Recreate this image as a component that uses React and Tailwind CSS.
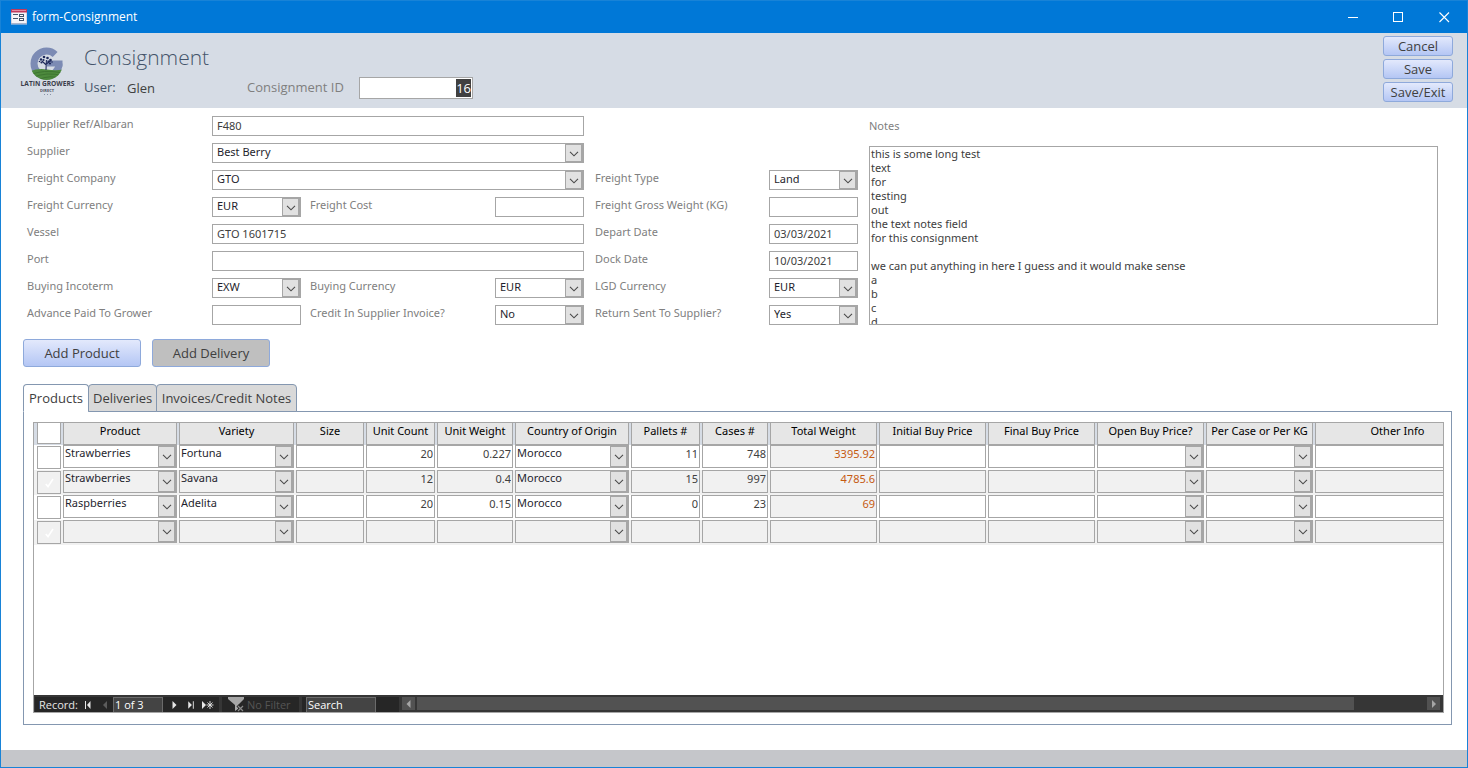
import { useEffect, useRef } from 'react';

const cn = (...parts) => parts.filter(Boolean).join(' ');

const smallText = "font-['Noto_Sans','Open_Sans',sans-serif] text-[11px]";

function Chevron() {
  return (
    <span
      aria-hidden="true"
      className="pointer-events-none absolute inset-y-0 right-0 flex w-[18px] items-center justify-center border border-r-2 border-[#a6a6a6] bg-[#e1e1e1]"
    >
      <svg width="10" height="6" viewBox="0 0 10 6" fill="none" stroke="#4a4a4a" strokeWidth="1.1" className="mt-px">
        <path d="M1 .8 5 4.8 9 .8" />
      </svg>
    </span>
  );
}

function Label({ id, children, className }) {
  return (
    <label htmlFor={id} className={cn(smallText, 'whitespace-nowrap leading-4 text-[#808080]', className)}>
      {children}
    </label>
  );
}

function TextField({ id, value = '', className }) {
  return (
    <input
      id={id}
      type="text"
      defaultValue={value}
      className={cn(smallText, 'h-5 w-full min-w-0 border border-[#a6a6a6] bg-white px-1 pb-0.5 leading-4 text-[#404040] outline-none', className)}
    />
  );
}

function SelectField({ id, value, className }) {
  return (
    <div className={cn('relative h-5 border border-[#a6a6a6] bg-white', className)}>
      <select
        id={id}
        defaultValue={value}
        className={cn(smallText, 'block h-[18px] w-full appearance-none bg-transparent pr-5 pb-0.5 pl-1 leading-4 text-[#1f1f2e] outline-none')}
      >
        <option>{value}</option>
      </select>
      <Chevron />
    </div>
  );
}

const actionButton =
  'flex items-center justify-center rounded-[3px] border border-[#8ea9db] bg-linear-to-b from-[#e3e9fc] to-[#b4c6f4] pb-px text-[13px] leading-4 text-[#404040]';

function FormIcon() {
  return (
    <svg width="16" height="16" viewBox="0 0 16 16" aria-hidden="true">
      <rect x=".5" y=".5" width="15" height="14.5" fill="#f4f4f8" stroke="#d7d3e0" />
      <rect width="16" height="3.5" fill="#c0395c" />
      <rect x="1" y="1" width="14" height="1" fill="#e08aa0" />
      <path d="M2 5.500h5M2 9.500h5" stroke="#44546a" />
      <rect x="8.5" y="5.500" width="4" height="2" fill="#fff" stroke="#44546a" />
      <rect x="8.5" y="9.500" width="4" height="2" fill="#fff" stroke="#44546a" />
      <path d="M0 14.500h16" stroke="#a9b4cc" />
    </svg>
  );
}

function Logo() {
  return (
    <svg width="56" height="52" viewBox="0 0 56 52" role="img" aria-label="Latin Growers Direct" className="shrink-0">
      <defs>
        <clipPath id="disc">
          <circle cx="26.5" cy="18.500" r="16.5" />
        </clipPath>
      </defs>
      <circle cx="26.5" cy="18.500" r="12.5" fill="none" stroke="#7c8bb4" strokeWidth="7" strokeDasharray="68 10.540" />
      <rect x="27" y="15.500" width="15.500" height="6" fill="#7c8bb4" />
      <g clipPath="url(#disc)">
        <path d="M8 27 Q17 23 27 24.5 T46 24 V36 H8 Z" fill="#4d8a3d" />
        <path d="M10 30 Q22 24 44 28 M12 33 Q26 26 44 31 M18 35 Q30 29 42 34" stroke="#3a702f" fill="none" strokeWidth=".8" />
      </g>
      <path d="M26 25 26.4 15M26.2 20 22 16M26.3 19 31 15.5" stroke="#1f2a5c" strokeWidth="1.1" fill="none" />
      <g fill="#1f2a5c">
        <circle cx="21" cy="14.5" r="1.2" />
        <circle cx="24" cy="12" r="1.3" />
        <circle cx="23.500" cy="15" r="1.100" />
        <circle cx="27.5" cy="13" r="1.3" />
        <circle cx="30.5" cy="15" r="1.3" />
        <circle cx="28.500" cy="16.500" r="1" />
        <circle cx="21.5" cy="17.500" r="1.1" />
        <circle cx="30" cy="18.5" r="1.1" />
        <circle cx="32" cy="17" r=".8" />
        <circle cx="19.5" cy="16.5" r=".8" />
      </g>
      <text x="27.5" y="41" textAnchor="middle" fontFamily="Open Sans, sans-serif" fontWeight="700" fontSize="6.6" fill="#3a3c4a">
        LATIN GROWERS
      </text>
      <text x="27" y="46.6" textAnchor="middle" fontFamily="Open Sans, sans-serif" fontWeight="700" fontSize="4" fill="#4c5060">
        DIRECT
      </text>
      <path d="M24 49.5h1M27 49.5h1M30 49.5h1" stroke="#8a92a8" />
    </svg>
  );
}

function TitleBar() {
  return (
    <div className="flex h-8 items-center bg-[#0078d7] pl-2.5 text-white">
      <FormIcon />
      <h1 className="flex-1 pl-[5px] text-[12px] leading-4">form-Consignment</h1>
      <button type="button" aria-label="Minimize" className="flex h-8 w-[45px] items-center justify-center">
        <svg width="11" height="11" viewBox="0 0 11 11" stroke="currentColor"><path d="M1 5.5h10" /></svg>
      </button>
      <button type="button" aria-label="Maximize" className="flex h-8 w-[46px] items-center justify-center">
        <svg width="11" height="11" viewBox="0 0 11 11" stroke="currentColor" fill="none"><rect x=".5" y=".5" width="9" height="9" /></svg>
      </button>
      <button type="button" aria-label="Close" className="flex h-8 w-[46px] items-center justify-center">
        <svg width="11" height="11" viewBox="0 0 11 11" stroke="currentColor" strokeWidth="1.1"><path d="M.5.5l9.500 9.500M10 .5l-9.500 9.500" /></svg>
      </button>
    </div>
  );
}

function Header() {
  const idRef = useRef(null);
  useEffect(() => {
    idRef.current.focus();
    idRef.current.select();
  }, []);
  return (
    <header className="flex bg-[#d6dce5] pl-[19px] pr-3.5">
      <div className="pt-3">
        <Logo />
      </div>
      <div className="flex-1 pl-2 pt-2">
        <h2 className="pb-1 text-[21px] leading-8 font-light text-[#44546a]">Consignment</h2>
        <div className="flex h-[22px] items-center text-[13px] leading-5 text-[#44546a]">
          <span className="w-[43px] pb-0.5">User:</span>
          <span className="w-[120px] text-[#404040]">Glen</span>
          <label htmlFor="consignment-id" className="w-28 pb-0.5 text-[#7f7f7f]">Consignment ID</label>
          <input
            id="consignment-id"
            ref={idRef}
            defaultValue="16"
            className="h-[22px] w-[114px] border border-[#a6a6a6] bg-white pr-px text-right text-[#404040] outline-none selection:bg-[#404040] selection:text-white"
          />
        </div>
      </div>
      <div className="flex w-[70px] flex-col gap-[3px] pt-[3px] pb-1.5">
        <button type="button" className={cn(actionButton, 'h-5')}>Cancel</button>
        <button type="button" className={cn(actionButton, 'h-5')}>Save</button>
        <button type="button" className={cn(actionButton, 'h-5')}>Save/Exit</button>
      </div>
    </header>
  );
}

const notes = `this is some long test
text
for
testing
out
the text notes field
for this consignment

we can put anything in here I guess and it would make sense
a
b
c
d`;

function ConsignmentForm() {
  return (
    <div className="flex gap-[11px] pt-2 pr-[29px] pl-[26px]">
      <div className="grid shrink-0 auto-rows-[20px] grid-cols-[185px_89px_194px_89px_185px_89px] gap-y-[7px]">
        <Label id="ref">Supplier Ref/Albaran</Label>
        <TextField id="ref" value="F480" className="col-span-3" />
        <span className="col-span-2" />

        <Label id="supplier">Supplier</Label>
        <SelectField id="supplier" value="Best Berry" className="col-span-3" />
        <span className="col-span-2" />

        <Label id="company">Freight Company</Label>
        <SelectField id="company" value="GTO" className="col-span-3" />
        <Label id="type" className="pl-[11px]">Freight Type</Label>
        <SelectField id="type" value="Land" />

        <Label id="fcur">Freight Currency</Label>
        <SelectField id="fcur" value="EUR" />
        <Label id="fcost" className="pl-[9px]">Freight Cost</Label>
        <TextField id="fcost" />
        <Label id="gross" className="pl-[11px]">Freight Gross Weight (KG)</Label>
        <TextField id="gross" />

        <Label id="vessel">Vessel</Label>
        <TextField id="vessel" value="GTO 1601715" className="col-span-3" />
        <Label id="depart" className="pl-[11px]">Depart Date</Label>
        <TextField id="depart" value="03/03/2021" />

        <Label id="port">Port</Label>
        <TextField id="port" className="col-span-3" />
        <Label id="dock" className="pl-[11px]">Dock Date</Label>
        <TextField id="dock" value="10/03/2021" />

        <Label id="incoterm">Buying Incoterm</Label>
        <SelectField id="incoterm" value="EXW" />
        <Label id="bcur" className="pl-[9px]">Buying Currency</Label>
        <SelectField id="bcur" value="EUR" />
        <Label id="lgd" className="pl-[11px]">LGD Currency</Label>
        <SelectField id="lgd" value="EUR" />

        <Label id="advance">Advance Paid To Grower</Label>
        <TextField id="advance" />
        <Label id="credit" className="pl-[9px]">Credit In Supplier Invoice?</Label>
        <SelectField id="credit" value="No" />
        <Label id="return" className="pl-[11px]">Return Sent To Supplier?</Label>
        <SelectField id="return" value="Yes" />
      </div>
      <div className="flex min-w-0 flex-1 flex-col pt-0.5">
        <Label id="notes">Notes</Label>
        <textarea
          id="notes"
          defaultValue={notes}
          className={cn(smallText, 'mt-3 min-h-0 flex-1 resize-none overflow-hidden border border-[#a6a6a6] px-px leading-[14px] text-[#404040] outline-none')}
        />
      </div>
    </div>
  );
}

const columns = [
  { key: 'product', title: 'Product', width: 116, kind: 'select' },
  { key: 'variety', title: 'Variety', width: 117, kind: 'select' },
  { key: 'size', title: 'Size', width: 70, kind: 'text' },
  { key: 'count', title: 'Unit Count', width: 71, kind: 'number' },
  { key: 'weight', title: 'Unit Weight', width: 78, kind: 'number' },
  { key: 'origin', title: 'Country of Origin', width: 116, kind: 'select' },
  { key: 'pallets', title: 'Pallets #', width: 71, kind: 'number' },
  { key: 'cases', title: 'Cases #', width: 68, kind: 'number' },
  { key: 'total', title: 'Total Weight', width: 109, kind: 'total' },
  { key: 'initial', title: 'Initial Buy Price', width: 109, kind: 'text' },
  { key: 'final', title: 'Final Buy Price', width: 109, kind: 'text' },
  { key: 'open', title: 'Open Buy Price?', width: 109, kind: 'select' },
  { key: 'per', title: 'Per Case or Per KG', width: 109, kind: 'select' },
  { key: 'info', title: 'Other Info', width: 167, kind: 'text' },
];

const rows = [
  { product: 'Strawberries', variety: 'Fortuna', count: '20', weight: '0.227', origin: 'Morocco', pallets: '11', cases: '748', total: '3395.92' },
  { product: 'Strawberries', variety: 'Savana', count: '12', weight: '0.4', origin: 'Morocco', pallets: '15', cases: '997', total: '4785.6' },
  { product: 'Raspberries', variety: 'Adelita', count: '20', weight: '0.15', origin: 'Morocco', pallets: '0', cases: '23', total: '69' },
  {},
];

function Cell({ column, value = '', shaded, row }) {
  const label = `${column.title}, row ${row}`;
  const background = shaded || column.kind === 'total' ? 'bg-[#f1f1f1]' : 'bg-white';
  if (column.kind === 'select') {
    return (
      <div className={cn('relative h-[23px] border border-[#a6a6a6]', background)}>
        <select
          aria-label={label}
          defaultValue={value}
          className={cn(smallText, 'block h-[21px] w-full appearance-none bg-transparent pr-5 pb-[7px] pl-px leading-[14px] text-[#1f1f2e] outline-none')}
        >
          <option>{value}</option>
        </select>
        <Chevron />
      </div>
    );
  }
  return (
    <input
      aria-label={label}
      defaultValue={value}
      readOnly={column.kind === 'total'}
      className={cn(
        smallText,
        'block h-[23px] w-full border border-[#a6a6a6] px-px pb-[7px] leading-[14px] outline-none',
        background,
        column.kind === 'text' ? 'text-left' : 'text-right',
        column.kind === 'total' ? 'text-[#c55a11]' : 'text-[#404040]',
      )}
    />
  );
}

function RowCheck({ shaded, row }) {
  return (
    <label className="relative mt-px block h-[23px] w-6">
      <input
        type="checkbox"
        defaultChecked={shaded}
        aria-label={`Select row ${row}`}
        className={cn('block h-full w-full appearance-none border border-[#a6a6a6]', shaded ? 'bg-[#f1f1f1]' : 'bg-white')}
      />
      {shaded && (
        <svg className="pointer-events-none absolute inset-0 m-auto" width="9" height="10" viewBox="0 0 9 10" fill="none" stroke="#fff" strokeWidth="1.6">
          <path d="M.8 6 3 8.600 8 1" />
        </svg>
      )}
    </label>
  );
}

function ProductsTable() {
  return (
    <div className="min-h-0 flex-1 overflow-hidden">
      <table className="w-[1448px] table-fixed border-collapse">
        <colgroup>
          <col style={{ width: 29 }} />
          {columns.map((c) => (
            <col key={c.key} style={{ width: c.width }} />
          ))}
        </colgroup>
        <thead>
          <tr className="bg-[#d6dce5]">
            <th className="p-0 pr-0.5 pl-[3px] align-top">
              <span className="block h-[21px] border border-t-0 border-[#a6a6a6] bg-white" />
            </th>
            {columns.map((c) => (
              <th key={c.key} scope="col" className="p-0 pr-0.5 align-top font-normal">
                <span className={cn(smallText, 'block h-[22px] border border-t-0 border-[#a6a6a6] bg-[#e6e6e6] leading-4 whitespace-nowrap text-black')}>
                  {c.title}
                </span>
              </th>
            ))}
          </tr>
        </thead>
        <tbody>
          {rows.map((r, i) => {
            const shaded = i % 2 === 1;
            return (
              <tr key={i} className={shaded ? 'h-[25px] bg-[#f1f1f1]' : 'h-[25px]'}>
                <td className="p-0 pl-[3px] align-top">
                  <RowCheck shaded={shaded} row={i + 1} />
                </td>
                {columns.map((c) => (
                  <td key={c.key} className="p-0 pr-0.5 align-top">
                    <Cell column={c} value={r[c.key]} shaded={shaded} row={i + 1} />
                  </td>
                ))}
              </tr>
            );
          })}
        </tbody>
      </table>
    </div>
  );
}

function NavButton({ label, className, children }) {
  return (
    <button type="button" aria-label={label} className={cn('flex h-full shrink-0 items-center justify-center', className)}>
      <svg width="13" height="10" viewBox="0 0 13 10" fill="currentColor">{children}</svg>
    </button>
  );
}

function RecordBar() {
  return (
    <div className="flex h-[17px] shrink-0 gap-[3px] bg-[#363636] pt-0.5 pl-px text-[11px] leading-[15px] text-white">
      <div className="flex w-[184px] bg-[#262626] pl-1 text-[#e6e6e6]">
        <span className="w-[42px] font-medium">Record:</span>
        <NavButton label="First record" className="w-[14px]">
          <path d="M3 1h1v8H3zM8.500 1v8L5 5z" />
        </NavButton>
        <NavButton label="Previous record" className="w-[18px] text-[#5c5c5c]">
          <path d="M9 1v8L5 5z" />
        </NavButton>
        <input aria-label="Current record" defaultValue="1 of 3" className="h-[15px] w-[50px] border border-b-0 border-[#6b6b6b] bg-[#444] px-px pb-0.5 leading-3 text-white outline-none" />
        <NavButton label="Next record" className="w-[22px]">
          <path d="M4.500 1v8l4-4z" />
        </NavButton>
        <NavButton label="Last record" className="w-3">
          <path d="M3.500 1v8l4-4zM8.500 1h1v8h-1z" />
        </NavButton>
        <NavButton label="New record" className="w-5">
          <path d="M1 1v8l4-4z" />
          <path d="M9 1v8M5.500 5h7M6.500 2.500l5 5M11.500 2.500l-5 5" stroke="currentColor" strokeWidth=".9" />
        </NavButton>
      </div>
      <button type="button" disabled className="flex w-[77px] items-center bg-[#262626] pl-1.5 whitespace-nowrap text-[#555]">
        <svg width="16" height="15" viewBox="0 0 16 15" className="mr-[3px] shrink-0">
          <path d="M0 0h16v2l-6 6v4l-3 2V8L0 2z" fill="#a6a6a6" />
          <path d="M9.500 8.500l6 6M15.500 8.500l-6 6" stroke="#262626" strokeWidth="3" />
          <path d="M10 9l5 5M15 9l-5 5" stroke="#8a8a8a" strokeWidth="1.200" />
        </svg>
        No Filter
      </button>
      <div className="flex w-[97px] bg-[#262626] pl-1">
        <input aria-label="Search" defaultValue="Search" className="h-[15px] w-[70px] border border-b-0 border-[#6b6b6b] bg-[#444] px-px pb-0.5 leading-3 font-medium text-white outline-none" />
      </div>
      <div className="flex h-[13px] flex-1 gap-0.5 pr-[3px]">
        <NavButton label="Scroll left" className="w-[13px] bg-[#525252] text-[#a6a6a6]">
          <path d="M8.500 1v8l-4-4z" />
        </NavButton>
        <div className="flex-1">
          <div className="h-full w-[93%] bg-[#525252]" />
        </div>
        <NavButton label="Scroll right" className="w-[13px] bg-[#525252] text-[#a6a6a6]">
          <path d="M5 1v8l4-4z" />
        </NavButton>
      </div>
    </div>
  );
}

function Tabs() {
  const base = 'h-[28px] rounded-t-[4px] border border-[#8497b0] px-1 text-[13px] leading-5 whitespace-nowrap text-[#404040]';
  return (
    <div role="tablist" className="relative -mb-px flex">
      <button type="button" role="tab" aria-selected="true" className={cn(base, 'w-[66px] border-b-white bg-white')}>Products</button>
      <button type="button" role="tab" aria-selected="false" className={cn(base, '-ml-px w-[69px] bg-[#d9d9d9]')}>Deliveries</button>
      <button type="button" role="tab" aria-selected="false" className={cn(base, '-ml-px w-[141px] bg-[#d9d9d9]')}>Invoices/Credit Notes</button>
    </div>
  );
}

export default function App() {
  return (
    <div className="flex min-h-screen flex-col border border-[#1883d7] bg-white font-['Open_Sans','Noto_Sans',sans-serif]">
      <TitleBar />
      <Header />
      <main className="flex flex-1 flex-col">
        <ConsignmentForm />
        <div className="flex gap-[11px] pt-3.5 pl-[22px]">
          <button type="button" className={cn(actionButton, 'h-7 w-[118px]')}>Add Product</button>
          <button type="button" className="h-7 w-[118px] rounded-[3px] border border-[#8ea9db] bg-[#bfbfbf] pb-px text-[13px] leading-4 text-[#404040]">
            Add Delivery
          </button>
        </div>
        <section className="flex flex-1 flex-col pt-[17px] pr-[15px] pb-[25px] pl-[22px]">
          <Tabs />
          <div role="tabpanel" className="flex flex-1 flex-col border border-[#8497b0] pt-2.5 pr-[7px] pb-[11px] pl-[9px]">
            <div className="flex min-w-0 flex-1 flex-col border border-[#a6a6a6]">
              <ProductsTable />
              <RecordBar />
            </div>
          </div>
        </section>
      </main>
      <footer className="h-[17px] bg-[#c5c6ca]" />
    </div>
  );
}
